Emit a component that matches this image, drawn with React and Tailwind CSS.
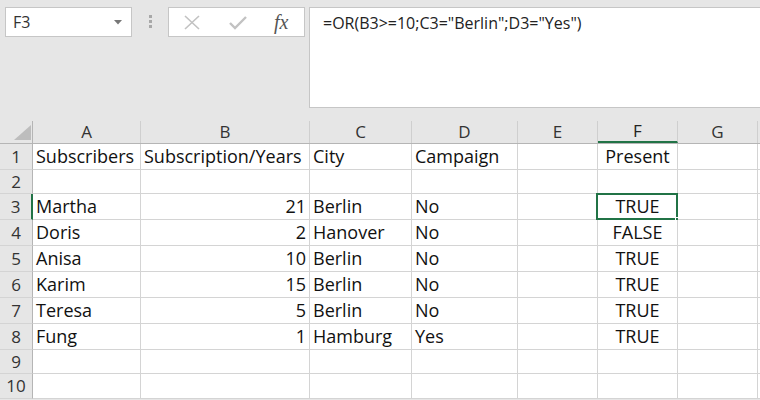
import React from "react";

const cols = ["A", "B", "C", "D", "E", "F", "G"];
const rows = [
  { n: 1, h: "h-[26px]", c: ["Subscribers", "Subscription/Years", "City", "Campaign", "", "Present", ""] },
  { n: 2, h: "h-[24px]", c: ["", "", "", "", "", "", ""] },
  { n: 3, h: "h-[26px]", c: ["Martha", "21", "Berlin", "No", "", "TRUE", ""] },
  { n: 4, h: "h-[26px]", c: ["Doris", "2", "Hanover", "No", "", "FALSE", ""] },
  { n: 5, h: "h-[26px]", c: ["Anisa", "10", "Berlin", "No", "", "TRUE", ""] },
  { n: 6, h: "h-[26px]", c: ["Karim", "15", "Berlin", "No", "", "TRUE", ""] },
  { n: 7, h: "h-[26px]", c: ["Teresa", "5", "Berlin", "No", "", "TRUE", ""] },
  { n: 8, h: "h-[26px]", c: ["Fung", "1", "Hamburg", "Yes", "", "TRUE", ""] },
  { n: 9, h: "h-[24px]", c: ["", "", "", "", "", "", ""] },
  { n: 10, h: "h-[25px]", c: ["", "", "", "", "", "", ""] },
];
const widths = ["w-[108px]", "w-[169px]", "w-[102px]", "w-[106px]", "w-[80px]", "w-[80px]", "w-[80px]"];

export default function App() {
  return (
    <div
      className="w-[760px] h-[400px] overflow-hidden bg-[#e6e6e6] text-[#111]"
      style={{ fontFamily: '"Open Sans", "Noto Sans", sans-serif' }}
    >
      {/* toolbar */}
      <div className="flex h-[121px] items-start pt-[7px]">
        <div className="ml-[5px] flex h-[30px] w-[127px] items-center justify-between border border-[#c6c6c6] bg-white pl-[7px] pr-[9px]">
          <span className="text-[16px] text-[#333]">F3</span>
          <svg width="8" height="5" viewBox="0 0 8 5">
            <path d="M0 0 L8 0 L4 4.5 Z" fill="#777" />
          </svg>
        </div>
        <div className="ml-[17px] mt-[8px] flex w-[4px] flex-col gap-[2px]">
          <div className="h-[3px] w-[3px] bg-[#a8a8a8]" />
          <div className="h-[3px] w-[3px] bg-[#a8a8a8]" />
          <div className="h-[3px] w-[3px] bg-[#a8a8a8]" />
        </div>
        <div className="ml-[15px] flex h-[30px] w-[137px] items-center border border-[#c6c6c6] bg-white">
          <svg className="ml-[15px]" width="16" height="15" viewBox="0 0 16 15">
            <path d="M1 1 L15 14 M15 1 L1 14" stroke="#c2c2c2" strokeWidth="1.6" fill="none" />
          </svg>
          <svg className="ml-[29px]" width="18" height="15" viewBox="0 0 18 15">
            <path d="M1 8 L6 13 L17 2" stroke="#c2c2c2" strokeWidth="2.4" fill="none" />
          </svg>
          <span
            className="ml-[27px] text-[20px] italic leading-none text-[#555]"
            style={{ fontFamily: '"Liberation Serif", "DejaVu Serif", serif' }}
          >
            fx
          </span>
        </div>
        <div className="ml-[4px] h-[101px] flex-1 border border-r-0 border-[#c6c6c6] bg-white pl-[13px] pt-[3px]">
          <span className="text-[16px] text-[#222]">=OR(B3&gt;=10;C3="Berlin";D3="Yes")</span>
        </div>
      </div>

      {/* grid header */}
      <div className="flex h-[23px] border-b border-[#b5b5b5]">
        <div className="relative w-[33px] shrink-0 border-r border-[#b5b5b5]">
          <svg className="absolute left-[14px] top-[4px]" width="17" height="15" viewBox="0 0 17 15">
            <path d="M17 0 L17 15 L0 15 Z" fill="#bdbdbd" />
          </svg>
        </div>
        {cols.map((c, i) => (
          <div
            key={c}
            className={`${widths[i]} shrink-0 flex items-center justify-center border-r border-[#cfcfcf] text-[17px] ${
              c === "F" ? "border-b-2 border-b-[#217346] text-[#222]" : "text-[#333]"
            }`}
          >
            {c}
          </div>
        ))}
        <div className="flex-1" />
      </div>

      {/* grid body */}
      {rows.map((r) => (
        <div key={r.n} className={`flex ${r.h}`}>
          <div
            className={`w-[33px] shrink-0 flex items-center justify-center border-b border-[#d4d4d4] text-[17px] text-[#333] ${
              r.n === 3 ? "border-r-2 border-r-[#217346]" : "border-r border-r-[#b5b5b5]"
            }`}
          >
            {r.n}
          </div>
          {r.c.map((v, i) => {
            const isNum = i === 1 && v !== "" && r.n > 1;
            const isF = i === 5;
            const sel = r.n === 3 && i === 5;
            return (
              <div
                key={i}
                className={`${widths[i]} relative shrink-0 flex items-center border-b border-r border-[#d4d4d4] bg-white text-[18px] ${
                  isNum ? "justify-end pr-[3px]" : isF ? "justify-center" : "pl-[3px]"
                }`}
              >
                <span className="whitespace-nowrap">{v}</span>
                {sel && (
                  <>
                    <div className="pointer-events-none absolute -left-[2px] -top-[1px] -right-[1px] -bottom-[1px] border-2 border-[#217346]" />
                    <div className="absolute -bottom-[3px] -right-[3px] h-[5px] w-[5px] border border-white bg-[#217346]" />
                  </>
                )}
              </div>
            );
          })}
          <div className="flex-1 border-b border-[#d4d4d4] bg-white" />
        </div>
      ))}
    </div>
  );
}
